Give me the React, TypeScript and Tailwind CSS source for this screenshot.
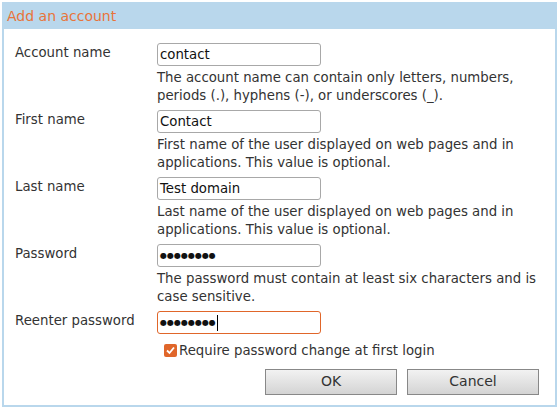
import React from "react";

const Row = ({ label, value, help, pw, focus }: { label: string; value: string; help?: string[]; pw?: boolean; focus?: boolean }) => (
  <div className="flex">
    <div className="w-[142px] pt-[0px]">{label}</div>
    <div className="flex flex-col">
      <div className={`w-[164px] h-[23px] rounded-[3px] border ${focus ? "border-[#e0662a]" : "border-[#a8a8a8]"} flex items-center px-[2px] text-[#111]`}>
        {pw ? <span className="tracking-[0px] text-[8px]">{value}</span> : value}
        {focus && <span className="w-px h-[16px] bg-black ml-[1px]" />}
      </div>
      {help && (
        <div className="mt-[3px] leading-[18px] mb-[5px]">
          {help.map((h) => (<div key={h}>{h}</div>))}
        </div>
      )}
    </div>
  </div>
);

export default function App() {
  return (
    <div className="w-[559px] h-[411px] bg-white p-[2px] text-[13.3px] text-[#333]" style={{ fontFamily: '"DejaVu Sans", sans-serif' }}>
      <div className="border-[2px] border-[#b9d7ec] h-[405px] flex flex-col">
        <div className="bg-[#b9d7ec] h-[25px] pl-[3px] text-[#e8743a] text-[14px] flex items-center">Add an account</div>
        <div className="pl-[11px] pt-[14px] flex flex-col">
          <Row label="Account name" value="contact" help={["The account name can contain only letters, numbers,", "periods (.), hyphens (-), or underscores (_)."]} />
          <Row label="First name" value="Contact" help={["First name of the user displayed on web pages and in", "applications. This value is optional."]} />
          <Row label="Last name" value="Test domain" help={["Last name of the user displayed on web pages and in", "applications. This value is optional."]} />
          <Row label="Password" value="●●●●●●●●" pw help={["The password must contain at least six characters and is", "case sensitive."]} />
          <Row label="Reenter password" value="●●●●●●●●" pw focus />
          <div className="ml-[149px] mt-[7px] flex items-center gap-[2px]">
            <span className="w-[13px] h-[13px] rounded-[2px] bg-[#e0662a] flex items-center justify-center">
              <svg width="11" height="11" viewBox="0 0 11 11"><path d="M2 5.5 L4.5 8 L9 2.5" stroke="#fff" strokeWidth="1.8" fill="none" /></svg>
            </span>
            <span>Require password change at first login</span>
          </div>
          <div className="flex justify-end gap-[10px] mr-[16px] mt-[8px]">
            <button className="w-[132px] h-[26px] border border-[#888] bg-gradient-to-b from-[#f2f2f2] to-[#d4d4d4] text-[14px] text-[#333]">OK</button>
            <button className="w-[132px] h-[26px] border border-[#888] bg-gradient-to-b from-[#f2f2f2] to-[#d4d4d4] text-[14px] text-[#333]">Cancel</button>
          </div>
        </div>
      </div>
    </div>
  );
}
